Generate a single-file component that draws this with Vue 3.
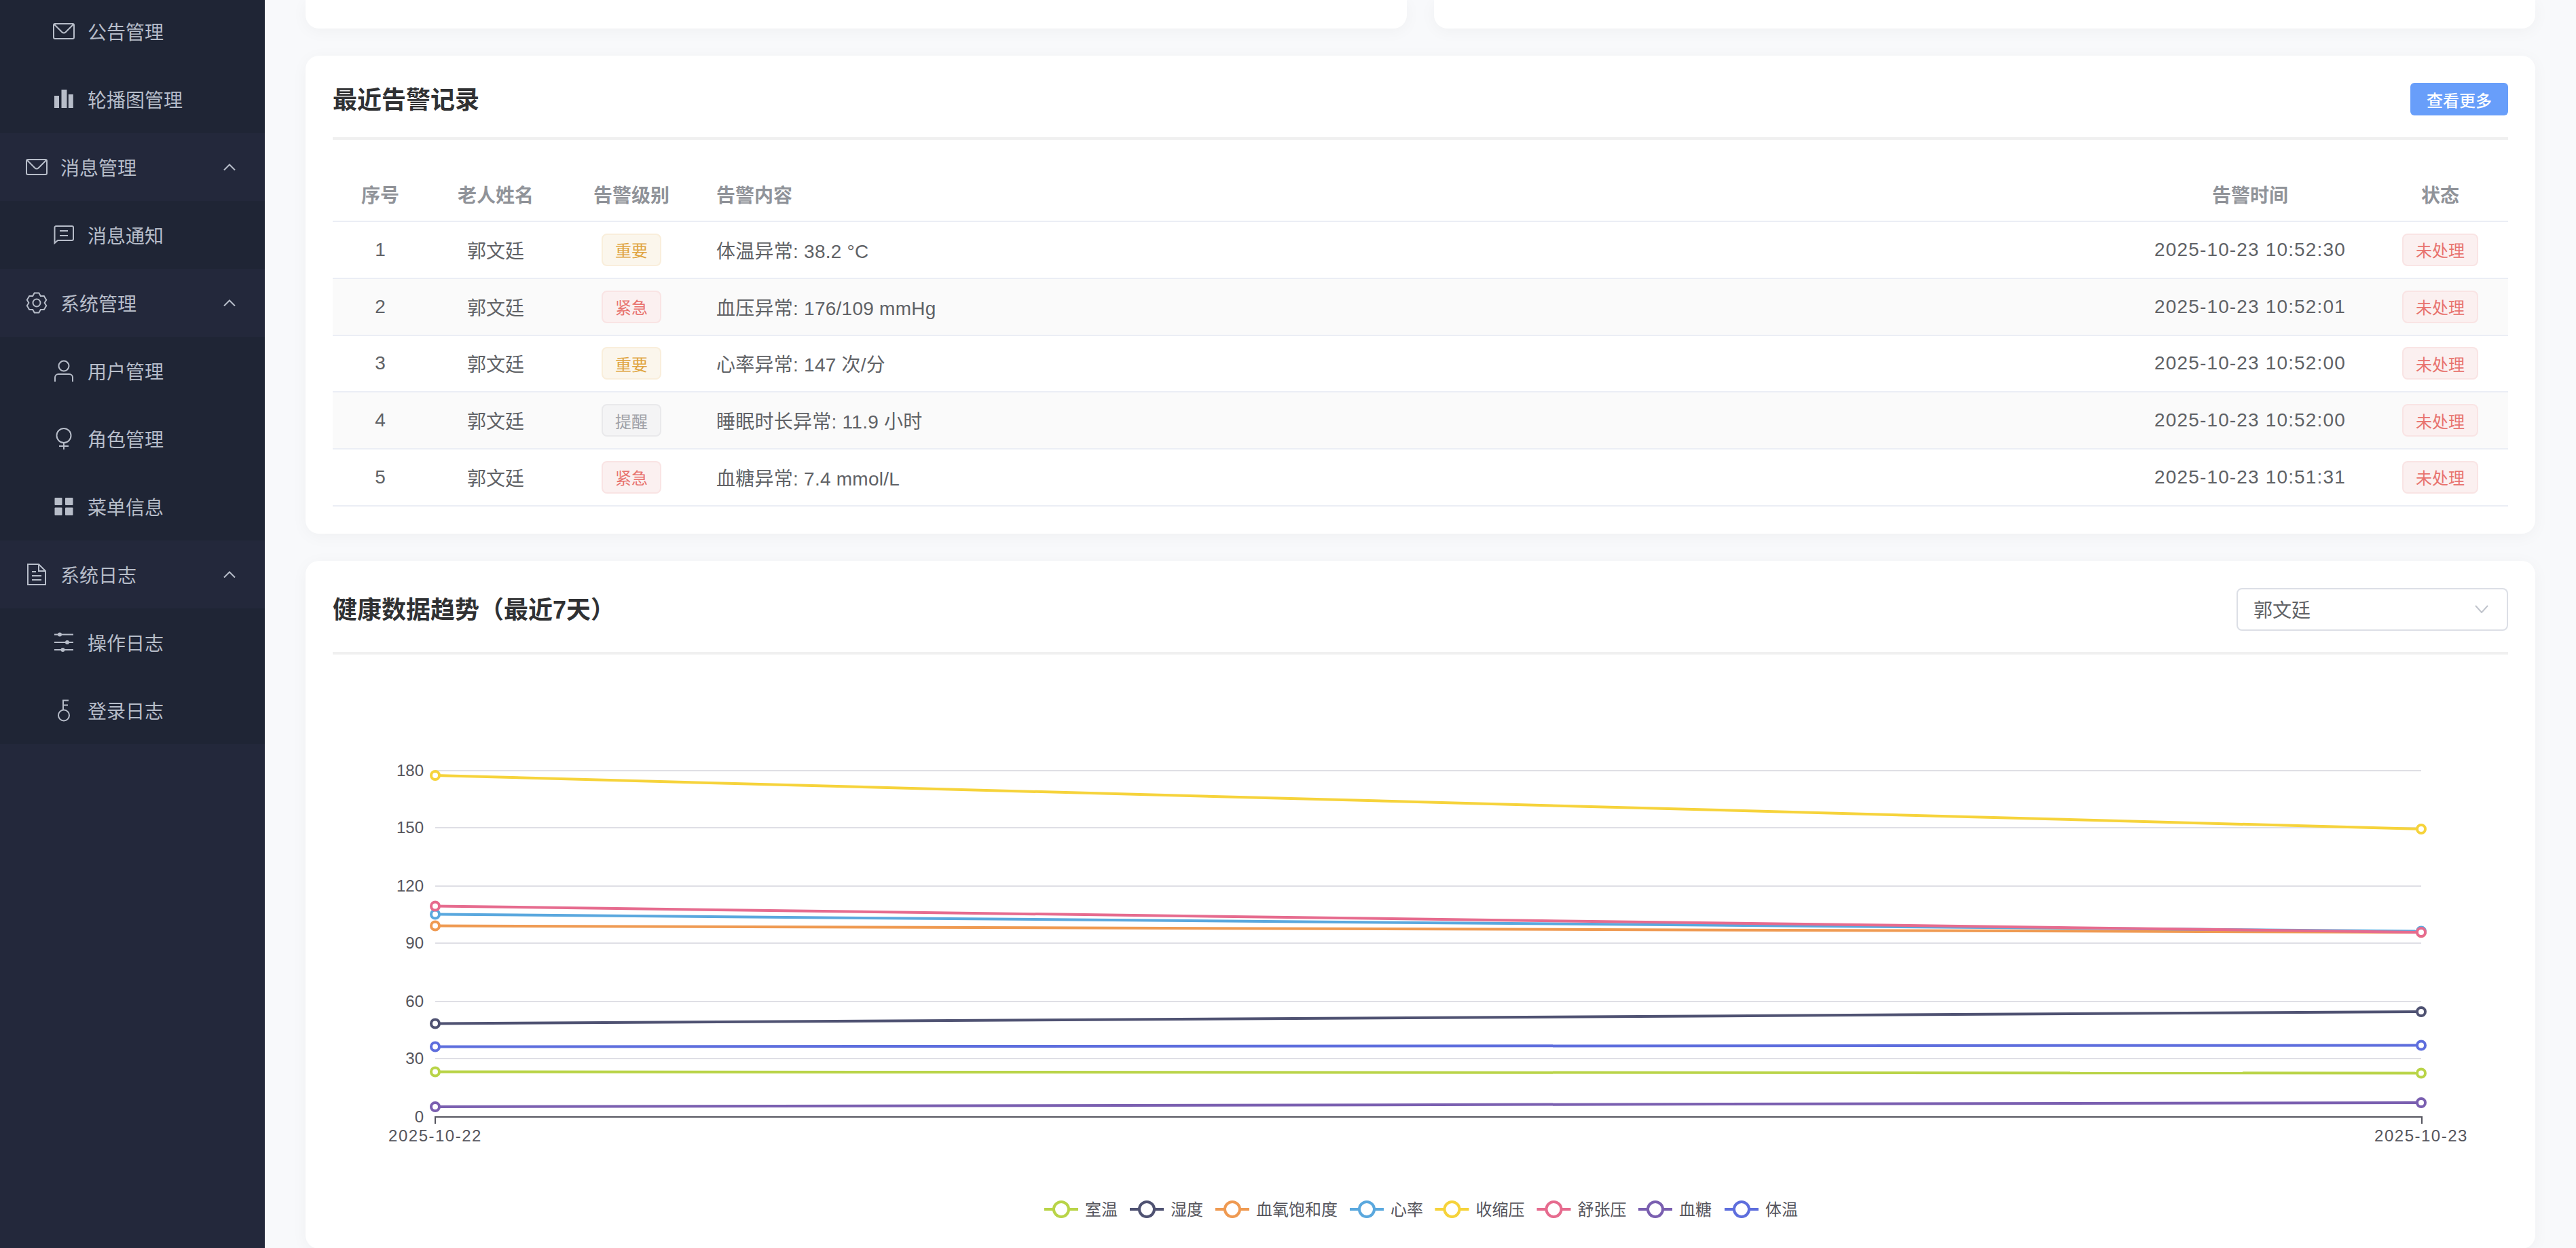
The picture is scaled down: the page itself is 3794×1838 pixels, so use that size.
<script setup>
// gear icon outline, six teeth
function gearPath() {
  let d = ''
  for (let i = 0; i < 6; i++) {
    const a = -90 + 60 * i
    const pts = [[11.6, a - 30], [14.8, a - 13], [14.8, a + 13]]
    pts.forEach(([r, deg], n) => {
      const x = 16 + r * Math.cos((deg * Math.PI) / 180)
      const y = 16 + r * Math.sin((deg * Math.PI) / 180)
      d += (i === 0 && n === 0 ? 'M' : 'L') + x.toFixed(1) + ' ' + y.toFixed(1)
    })
  }
  return d + 'Z'
}

const icons = {
  mail: { s: ['M3 5h26a2 2 0 0 1 2 2v18a2 2 0 0 1-2 2H3a2 2 0 0 1-2-2V7a2 2 0 0 1 2-2z', 'M2 6l11.5 11.5a3.5 3.5 0 0 0 5 0L30 6'] },
  bars: { f: ['M2 11h7v18H2z', 'M12.500 2h8v27h-8z', 'M22.800 9h7v20h-7z'] },
  chat: { s: ['M2.500 28V5a2 2 0 0 1 2-2H28a2 2 0 0 1 2 2v17a2 2 0 0 1-2 2H7z', 'M10 10h12', 'M10 17h12'] },
  gear: { s: [gearPath(), 'M16 10.500a5.500 5.500 0 1 0 0 11a5.500 5.500 0 1 0 0-11z'] },
  user: { s: ['M16 1.500a7.500 7.500 0 1 0 0 15a7.500 7.500 0 1 0 0-15z', 'M3 32v-6a5 5 0 0 1 5-5h16a5 5 0 0 1 5 5v6'] },
  bulb: { s: ['M16 1a10.500 10.500 0 1 0 0 21a10.500 10.500 0 1 0 0-21z', 'M16 22v10', 'M9 27h14'] },
  grid: { f: ['M3.500 3h9a1 1 0 0 1 1 1v9a1 1 0 0 1-1 1h-9a1 1 0 0 1-1-1V4a1 1 0 0 1 1-1z', 'M19 3h9.500a1 1 0 0 1 1 1v9a1 1 0 0 1-1 1H19a1 1 0 0 1-1-1V4a1 1 0 0 1 1-1z', 'M3.500 17.500h9a1 1 0 0 1 1 1v9.500a1 1 0 0 1-1 1h-9a1 1 0 0 1-1-1v-9.500a1 1 0 0 1 1-1z', 'M19 17.500h9.500a1 1 0 0 1 1 1v9.500a1 1 0 0 1-1 1H19a1 1 0 0 1-1-1v-9.500a1 1 0 0 1 1-1z'] },
  doc: { s: ['M3 1h16l10 10v20H3z', 'M19 1v10h10', 'M9 12h6', 'M9 18h14', 'M9 24h14'] },
  sliders: { s: ['M2 4.500h28', 'M2 16h28', 'M2 27h28'], f: ['M10 1.500a3 3 0 1 0 0 6a3 3 0 1 0 0-6z', 'M21 13a3 3 0 1 0 0 6a3 3 0 1 0 0-6z', 'M14.500 24a3 3 0 1 0 0 6a3 3 0 1 0 0-6z'] },
  key: { s: ['M16 15.500a8 8 0 1 0 0 16a8 8 0 1 0 0-16z', 'M15 15.500V1.500h8', 'M15 8.500h7'] },
}

const menu = [
  { label: '公告管理', icon: 'mail', sub: true, first: true },
  { label: '轮播图管理', icon: 'bars', sub: true },
  { label: '消息管理', icon: 'mail' },
  { label: '消息通知', icon: 'chat', sub: true },
  { label: '系统管理', icon: 'gear' },
  { label: '用户管理', icon: 'user', sub: true },
  { label: '角色管理', icon: 'bulb', sub: true },
  { label: '菜单信息', icon: 'grid', sub: true },
  { label: '系统日志', icon: 'doc' },
  { label: '操作日志', icon: 'sliders', sub: true },
  { label: '登录日志', icon: 'key', sub: true },
]

const alarms = [
  { level: '重要', type: 'warn', text: '体温异常: 38.2 °C', time: '2025-10-23 10:52:30' },
  { level: '紧急', type: 'danger', text: '血压异常: 176/109 mmHg', time: '2025-10-23 10:52:01' },
  { level: '重要', type: 'warn', text: '心率异常: 147 次/分', time: '2025-10-23 10:52:00' },
  { level: '提醒', type: 'info', text: '睡眠时长异常: 11.9 小时', time: '2025-10-23 10:52:00' },
  { level: '紧急', type: 'danger', text: '血糖异常: 7.4 mmol/L', time: '2025-10-23 10:51:31' },
]

// chart: coordinates are page pixels, the svg viewBox starts at the card's corner
const xLeft = 641
const xRight = 3566
const grid = [
  { label: '180', y: 1134 },
  { label: '150', y: 1218 },
  { label: '120', y: 1304 },
  { label: '90', y: 1388 },
  { label: '60', y: 1474 },
  { label: '30', y: 1558 },
]

const series = [
  { name: '室温', color: '#b9d448', y1: 1577.5, y2: 1579.5, lx: 1538 },
  { name: '湿度', color: '#4f5272', y1: 1506.5, y2: 1489, lx: 1664 },
  { name: '血氧饱和度', color: '#ef9a52', y1: 1362.5, y2: 1372, lx: 1790 },
  { name: '心率', color: '#5aa8de', y1: 1345.5, y2: 1370.5, lx: 1988 },
  { name: '收缩压', color: '#f6d33b', y1: 1141, y2: 1220, lx: 2113.5 },
  { name: '舒张压', color: '#e66b8e', y1: 1333.5, y2: 1372, lx: 2263.5 },
  { name: '血糖', color: '#7a5fb0', y1: 1629, y2: 1623, lx: 2413 },
  { name: '体温', color: '#5e6edd', y1: 1540.5, y2: 1538.5, lx: 2540 },
]
</script>

<template>
  <div class="layout">
    <aside class="sidebar">
      <div
        v-for="item in menu"
        :key="item.label"
        class="menu-item"
        :class="{ sub: item.sub, first: item.first }"
      >
        <svg class="menu-icon" viewBox="0 0 32 32">
          <path v-for="d in icons[item.icon].s" :key="d" :d="d" class="ico-line" />
          <path v-for="d in icons[item.icon].f" :key="d" :d="d" class="ico-fill" />
        </svg>
        <span class="menu-label">{{ item.label }}</span>
        <svg v-if="!item.sub" class="menu-arrow" viewBox="0 0 18 10">
          <path d="M1 9.500L9 1.500L17 9.500" class="ico-line" />
        </svg>
      </div>
    </aside>

    <main class="main">
      <div class="top-row">
        <div class="card cut"></div>
        <div class="card cut"></div>
      </div>

      <section class="card block">
        <div class="card-head">
          <h2>最近告警记录</h2>
          <button class="more">查看更多</button>
        </div>
        <table class="alarm-table">
          <colgroup>
            <col style="width: 140px" />
            <col style="width: 200px" />
            <col style="width: 200px" />
            <col />
            <col style="width: 360px" />
            <col style="width: 200px" />
          </colgroup>
          <thead>
            <tr>
              <th>序号</th>
              <th>老人姓名</th>
              <th>告警级别</th>
              <th class="left">告警内容</th>
              <th>告警时间</th>
              <th>状态</th>
            </tr>
          </thead>
          <tbody>
            <tr v-for="(row, i) in alarms" :key="i">
              <td>{{ i + 1 }}</td>
              <td>郭文廷</td>
              <td><span class="tag" :class="row.type">{{ row.level }}</span></td>
              <td class="left">{{ row.text }}</td>
              <td class="time">{{ row.time }}</td>
              <td><span class="tag danger">未处理</span></td>
            </tr>
          </tbody>
        </table>
      </section>

      <section class="card chart-card">
        <div class="card-head chart-head">
          <h2>健康数据趋势（最近7天）</h2>
          <div class="select">
            <span>郭文廷</span>
            <svg class="select-arrow" viewBox="0 0 20 12">
              <path d="M1 1L10 11L19 1" />
            </svg>
          </div>
        </div>
        <svg class="chart" viewBox="490 963 3204 875">
          <g v-for="g in grid" :key="g.label">
            <line :x1="xLeft" :x2="xRight" :y1="g.y" :y2="g.y" class="grid-line" />
            <text x="624" :y="g.y + 8" text-anchor="end" class="axis-text">{{ g.label }}</text>
          </g>
          <text x="624" y="1652" text-anchor="end" class="axis-text">0</text>
          <path :d="`M${xLeft} 1654V1644H${xRight + 1}V1654`" class="axis-line" />
          <text :x="xLeft" y="1680" text-anchor="middle" class="axis-text date">2025-10-22</text>
          <text :x="xRight" y="1680" text-anchor="middle" class="axis-text date">2025-10-23</text>

          <g v-for="s in series" :key="s.name">
            <line :x1="xLeft" :x2="xRight" :y1="s.y1" :y2="s.y2" :stroke="s.color" stroke-width="4" />
            <circle :cx="xLeft" :cy="s.y1" r="6" :stroke="s.color" class="dot" />
            <circle :cx="xRight" :cy="s.y2" r="6" :stroke="s.color" class="dot" />
          </g>

          <g v-for="s in series" :key="'legend' + s.name">
            <line :x1="s.lx" :x2="s.lx + 50" y1="1780" y2="1780" :stroke="s.color" stroke-width="4" />
            <circle :cx="s.lx + 25" cy="1780" r="11" :stroke="s.color" class="dot" />
            <text :x="s.lx + 60" y="1789" class="axis-text">{{ s.name }}</text>
          </g>
        </svg>
      </section>
    </main>
  </div>
</template>

<style scoped>
.layout {
  display: flex;
  height: 1838px;
  overflow: hidden;
  font-family: "Liberation Sans", "Noto Sans CJK SC", sans-serif;
  background: #f8f9fb;
}

.sidebar {
  width: 390px;
  flex-shrink: 0;
  background: #23283b;
  color: #b7bdc9;
  overflow: hidden;
}

.menu-item {
  display: flex;
  align-items: center;
  height: 100px;
  padding-left: 38px;
  padding-right: 43px;
  font-size: 28px;
}

.menu-item.sub {
  padding-left: 78px;
  background: #1f2535;
}

.menu-item.first {
  height: 96px;
}

.menu-item.first .menu-icon,
.menu-item.first .menu-label {
  position: relative;
  top: -2px;
}

.menu-icon {
  width: 32px;
  height: 32px;
  margin-right: 19px;
  flex-shrink: 0;
  overflow: visible;
}

.ico-line {
  fill: none;
  stroke: #b7bdc9;
  stroke-width: 2;
}

.ico-fill {
  fill: #b7bdc9;
}

.menu-label {
  flex: 1;
}

.menu-arrow {
  width: 18px;
  height: 10px;
}

.main {
  flex: 1;
  min-width: 0;
  padding: 0 60px;
}

.top-row {
  display: grid;
  grid-template-columns: 1fr 1fr;
  gap: 40px;
  height: 42px;
  margin-bottom: 40px;
}

.card {
  background: #fff;
  border-radius: 20px;
  box-shadow: 0 4px 24px rgba(0, 0, 0, 0.04);
}

.card.cut {
  border-radius: 0 0 20px 20px;
}

.block {
  padding: 40px;
  margin-bottom: 40px;
}

.card-head {
  display: flex;
  align-items: center;
  justify-content: space-between;
  padding-bottom: 32px;
  border-bottom: 4px solid #f0f0f0;
  margin-bottom: 40px;
}

.card-head h2 {
  margin: 0;
  padding-top: 4px;
  font-size: 36px;
  line-height: 44px;
  font-weight: 700;
  color: #303133;
}

.more {
  width: 144px;
  height: 48px;
  padding: 0;
  border: none;
  border-radius: 6px;
  background: #689efa;
  color: #fff;
  font-family: inherit;
  font-size: 24px;
  font-weight: 500;
}

.alarm-table {
  width: 100%;
  border-collapse: collapse;
  table-layout: fixed;
  font-size: 28px;
  color: #606266;
}

.alarm-table th {
  height: 79px;
  padding: 0;
  font-weight: 700;
  color: #909399;
  text-align: center;
  border-bottom: 2px solid #ebeef5;
}

.alarm-table td {
  height: 81.75px;
  padding: 0;
  text-align: center;
  border-bottom: 2px solid #ebeef5;
}

.alarm-table tbody tr:nth-child(even) td {
  background: #fafafa;
}

.alarm-table .left {
  text-align: left;
  padding-left: 25px;
}

.alarm-table td.left {
  letter-spacing: 0.25px;
}

.alarm-table .time {
  letter-spacing: 1.15px;
}

.tag {
  display: inline-flex;
  align-items: center;
  box-sizing: border-box;
  height: 48px;
  padding: 0 18px;
  border: 2px solid;
  border-radius: 8px;
  font-size: 24px;
  vertical-align: middle;
}

.tag.warn {
  color: #e0a43f;
  background: #fbf6ec;
  border-color: #f9eedb;
}

.tag.danger {
  color: #e8736e;
  background: #fbf0f0;
  border-color: #f9e4e4;
}

.tag.info {
  color: #a0a2a8;
  background: #f4f4f5;
  border-color: #e9e9eb;
}

.chart-card {
  padding: 40px 40px 0;
}

.chart-head {
  padding-bottom: 31px;
  margin-bottom: 0;
}

.select {
  display: flex;
  align-items: center;
  justify-content: space-between;
  box-sizing: border-box;
  width: 400px;
  height: 63px;
  padding: 0 27px 0 23px;
  border: 2px solid #dcdfe6;
  border-radius: 8px;
  font-size: 28px;
  color: #606266;
}

.select-arrow {
  width: 20px;
  height: 12px;
  fill: none;
  stroke: #c0c4cc;
  stroke-width: 2;
}

.chart {
  display: block;
  width: 3204px;
  height: 875px;
}

.grid-line {
  stroke: #dfdfe5;
  stroke-width: 2;
}

.axis-line {
  fill: none;
  stroke: #55555f;
  stroke-width: 2;
}

.axis-text {
  font-size: 24px;
  fill: #55555c;
}

.axis-text.date {
  letter-spacing: 1.5px;
}

.dot {
  fill: #fff;
  stroke-width: 4;
}
</style>
